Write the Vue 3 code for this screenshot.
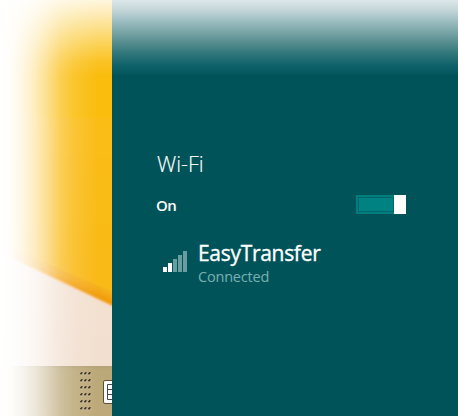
<script setup>
const gripRows = 6
const bars = [5, 9, 13, 17, 21]
</script>

<template>
  <div class="screen">
    <div class="desktop">
      <svg class="wallpaper" viewBox="0 0 112 366" width="112" height="366">
        <defs>
          <linearGradient id="sand" x1="0" y1="0" x2="0" y2="1">
            <stop offset="0" stop-color="#f7e7da" />
            <stop offset="1" stop-color="#f2dfcf" />
          </linearGradient>
          <linearGradient id="gold" x1="0" y1="0" x2="0" y2="1">
            <stop offset="0" stop-color="#fabf0c" />
            <stop offset="1" stop-color="#f9b91a" />
          </linearGradient>
          <linearGradient id="edge" gradientUnits="userSpaceOnUse" x1="80" y1="281" x2="76" y2="291">
            <stop offset="0" stop-color="#f5ae1c" />
            <stop offset="1" stop-color="#f29506" />
          </linearGradient>
          <filter id="soft" x="-10%" y="-10%" width="120%" height="120%">
            <feGaussianBlur stdDeviation="1" />
          </filter>
        </defs>
        <rect width="112" height="366" fill="url(#sand)" />
        <path d="M-5 250L117 308V-5H-5Z" fill="url(#edge)" filter="url(#soft)" />
        <path d="M-5 242L30 256L117 294V-5H-5Z" fill="url(#gold)" filter="url(#soft)" />
      </svg>
      <div class="taskbar">
        <div class="grip">
          <template v-for="r in gripRows" :key="r">
            <svg v-for="c in 3" :key="c" width="4" height="7" viewBox="0 0 4 7">
              <path d="M0 3.5V2.5L1.5 1H2.5V3.5Z" fill="#2d2618" />
              <path d="M0 3.5H2.4V2H3.2V4.3H0Z" fill="#d8cba8" opacity=".6" />
            </svg>
          </template>
        </div>
        <svg class="keyboard" width="9" height="24" viewBox="0 0 9 24">
          <rect x="0.5" y="0.5" width="14" height="23" rx="1.5" fill="#fff" stroke="#5b5137" />
          <path d="M9 4.5H4.5V19.5H9M4.5 9.5H9M4.5 14.5H9" fill="none" stroke="#484848" />
        </svg>
      </div>
      <div class="fade-side"></div>
      <div class="fade-top"></div>
    </div>

    <main class="panel">
      <h1>Wi-Fi</h1>
      <div class="setting">
        <span class="state">On</span>
        <div class="toggle" role="switch" aria-checked="true">
          <div class="track"></div>
          <div class="thumb"></div>
        </div>
      </div>
      <div class="network">
        <div class="signal">
          <i v-for="(h, i) in bars" :key="h" :class="{ lit: i < 2 }" :style="{ height: h + 'px' }"></i>
        </div>
        <div class="info">
          <div class="name">EasyTransfer</div>
          <div class="status">Connected</div>
        </div>
      </div>
    </main>
  </div>
</template>

<style>
body {
  margin: 0;
  background: #fff;
  overflow: hidden;
}
</style>

<style scoped>
.screen {
  display: flex;
  width: 458px;
  height: 416px;
  font-family: "Open Sans", "Noto Sans", sans-serif;
}
.desktop {
  position: relative;
  width: 112px;
  height: 416px;
  overflow: hidden;
}
.wallpaper {
  display: block;
}
.taskbar {
  display: flex;
  box-sizing: border-box;
  height: 50px;
  padding-left: 80px;
  background: linear-gradient(#b3a074, #bba878 3px, #bda979);
}
.grip {
  display: grid;
  grid-template-columns: repeat(3, 4px);
  grid-auto-rows: 7px;
  width: 12px;
  padding-top: 5px;
}
.keyboard {
  margin: 14px 0 0 11px;
}
.fade-side,
.fade-top {
  position: absolute;
  inset: 0;
}
.fade-side {
  background: linear-gradient(90deg, #fff 0, #fffffff8 11px, #ffffffdc 24px, #ffffffba 35px, #ffffff88 47px, #ffffff4a 60px, #ffffff22 74px, #fff0 98px);
}
.fade-top {
  background: linear-gradient(#ffffffdc 0, #ffffffb0 15px, #ffffff80 29px, #ffffff48 46px, #ffffff18 62px, #fff0 76px);
}
.panel {
  box-sizing: border-box;
  width: 346px;
  height: 416px;
  padding: 149px 52px 0 44px;
  color: #fff;
  background: linear-gradient(#dce7e9 0, #c4d6d9 10px, #9dbec1 21px, #69999b 37px, #35797c 52px, #10626a 65px, #005459 76px);
}
h1 {
  height: 30px;
  margin: 0 0 0 1px;
  font-size: 21.5px;
  font-weight: 300;
  line-height: 30px;
  -webkit-text-stroke: 0.15px #fff;
}
.setting {
  display: flex;
  justify-content: space-between;
  height: 20px;
  margin-top: 16px;
}
.state {
  font-size: 15px;
  font-weight: 600;
  letter-spacing: -0.5px;
  line-height: 20px;
}
.toggle {
  display: flex;
  width: 50px;
  height: 19px;
}
.track {
  box-sizing: border-box;
  width: 38px;
  height: 19px;
  border: 2px solid #007e7e;
  border-right: 0;
  background: #008282;
  box-shadow: inset 0 0 0 1px #00656a;
}
.thumb {
  width: 12px;
  background: #fff;
}
.network {
  display: flex;
  margin-top: 23px;
}
.signal {
  display: flex;
  align-items: flex-end;
  gap: 1px;
  width: 24px;
  height: 21px;
  margin: 13px 11px 0 7px;
}
.signal i {
  width: 4px;
  background: #6b9da0;
}
.signal .lit {
  background: #fff;
}
.name {
  height: 29px;
  font-size: 21px;
  letter-spacing: -0.3px;
  line-height: 30px;
  -webkit-text-stroke: 0.35px #fff;
}
.status {
  height: 18px;
  color: #79afb1;
  font-size: 14.5px;
  letter-spacing: -0.2px;
  line-height: 20px;
}
</style>
